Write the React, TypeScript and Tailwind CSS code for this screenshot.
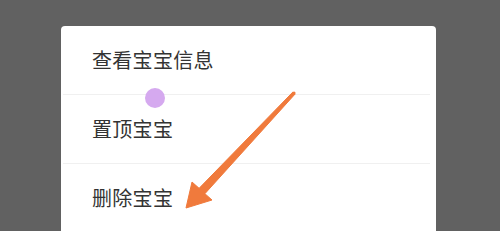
import React from 'react';

const items = ['查看宝宝信息', '置顶宝宝', '删除宝宝'];

export default function App() {
  return (
    <div
      className="relative w-[500px] h-[231px] overflow-hidden bg-[#616161] pt-[26px] pl-[61px]"
      style={{ fontFamily: '"Noto Sans CJK SC", "Noto Sans", sans-serif' }}
    >
      <div className="w-[375px] h-[230px] rounded-[4px] bg-white">
        {items.map((label, i) => (
          <div key={label}>
            <div className="h-[68px] flex items-center pl-[31px] text-[20px] leading-none text-[#333333] tracking-[0.3px]">
              {label}
            </div>
            {i < items.length - 1 && <div className="ml-[2px] mr-[6px] h-px bg-[#f0f0f0]" />}
          </div>
        ))}
      </div>

      {/* touch marker */}
      <div className="absolute left-[145px] top-[88px] w-[20px] h-[20px] rounded-full bg-[#d5a9ef]" />

      {/* annotation arrow */}
      <svg className="absolute inset-0" width="500" height="231" viewBox="0 0 500 231">
        <polygon
          points="295.1,94 204.9,193.7 212,200 186,208 192,182 199.1,188.3 292.9,92"
          fill="#f07a3c"
          stroke="#f07a3c"
          strokeWidth="1"
          strokeLinejoin="round"
        />
        <circle cx="294" cy="93" r="1.6" fill="#f07a3c" />
      </svg>
    </div>
  );
}
